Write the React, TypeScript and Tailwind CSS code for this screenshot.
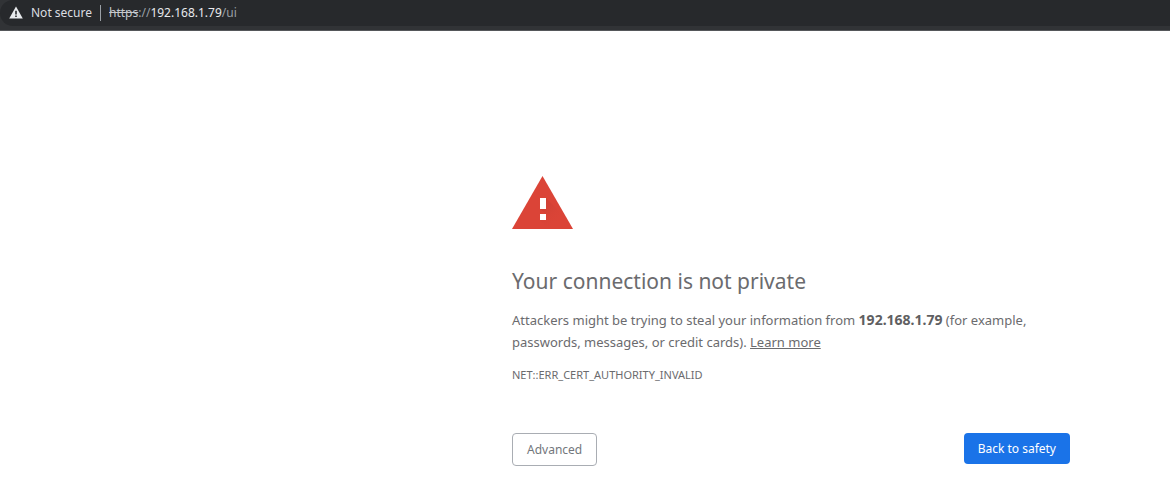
import type { ReactNode } from "react";

const HOST = "192.168.1.79";

function AddressBar() {
  return (
    <header className="bg-[#313336] border-b border-[#55575a] pb-1">
      <div className="flex items-center h-[26px] pl-2 rounded-l-full bg-[#27292c] text-xs leading-4">
        <svg className="w-4 h-4 shrink-0" viewBox="0 0 16 16" aria-hidden="true">
          <path d="M8 1.5 L14.8 13.5 H1.2 Z" fill="#e8eaed" />
          <path d="M7.2 5.8h1.6v3.7H7.2z M7.2 10.6h1.6v1.5H7.2z" fill="#27292c" />
        </svg>
        <span className="ml-[7px] text-[#dcdee1]">Not secure</span>
        <span className="w-px h-4 mx-2 bg-[#9aa0a6]" />
        <span className="text-[#9aa0a6]">
          <span className="line-through text-[#c5c8cc]">https</span>://
          <span className="text-[#e8eaed]">{HOST}</span>/ui
        </span>
      </div>
    </header>
  );
}

function WarningIcon() {
  return (
    <svg className="w-[61px] h-[53px]" viewBox="0 0 61 53" role="img" aria-label="Warning">
      <defs>
        <linearGradient id="shade" x1="0" y1="0" x2="1" y2="1">
          <stop offset="0" stopColor="#b93a2f" stopOpacity="0.6" />
          <stop offset="0.7" stopColor="#db4437" stopOpacity="0" />
        </linearGradient>
      </defs>
      <path d="M30.5 0 L61 53 H0 Z" fill="#db4437" />
      <path d="M34 22 L48 36 L58 53 H37 L28 44 L34 38 L28 33 Z" fill="url(#shade)" />
      <path d="M28 22h6v11h-6z M28 38h6v6h-6z" fill="#fff" />
    </svg>
  );
}

function Button({ primary, children }: { primary?: boolean; children: ReactNode }) {
  return (
    <button
      type="button"
      className={
        primary
          ? "h-[31px] px-3.5 rounded bg-[#1a73e8] text-white text-xs"
          : "h-[33px] px-3.5 rounded border border-[#a9adb3] text-[#73777c] text-xs"
      }
    >
      {children}
    </button>
  );
}

export default function App() {
  return (
    <div className="min-h-screen bg-white font-['Noto_Sans',sans-serif]">
      <AddressBar />

      <main className="w-full max-w-[558px] ml-auto mr-[100px] pt-[145px] text-[#6b6b6e]">
        <WarningIcon />

        <h1 className="mt-9 text-[21px] leading-8">Your connection is not private</h1>

        <p className="mt-3 text-[13px] leading-[22px]">
          Attackers might be trying to steal your information from{" "}
          <strong className="font-bold text-sm leading-[22px] text-[#5f5f62]">{HOST}</strong> (for example, passwords,
          messages, or credit cards).{" "}
          <a href="#" className="underline">Learn more</a>
        </p>

        <p className="mt-3 text-[11px] leading-5">NET::ERR_CERT_AUTHORITY_INVALID</p>

        {/* Actions */}
        <div className="flex items-start justify-between mt-12">
          <Button>Advanced</Button>
          <Button primary>Back to safety</Button>
        </div>
      </main>
    </div>
  );
}
